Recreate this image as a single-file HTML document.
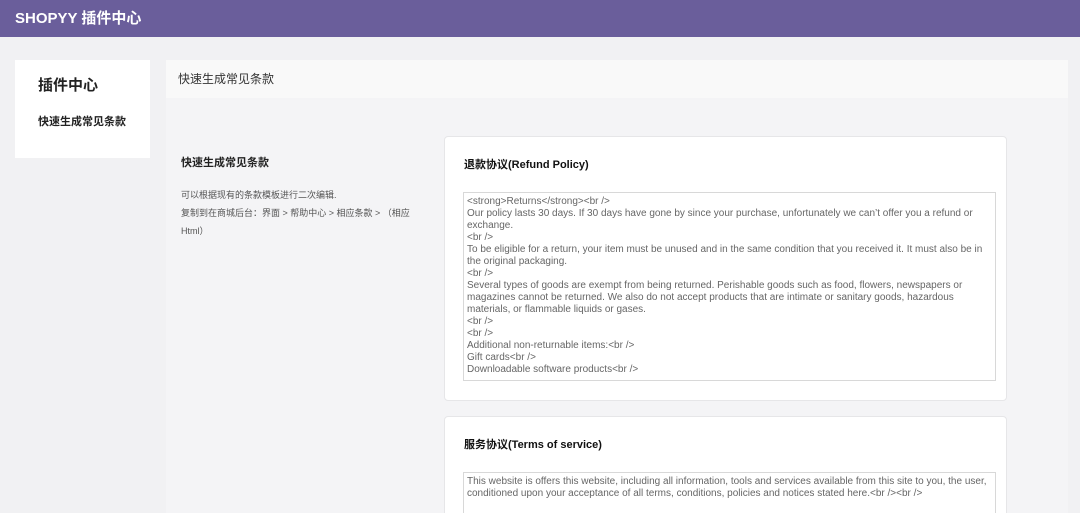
<!DOCTYPE html>
<html><head><meta charset="utf-8"><style>
*{margin:0;padding:0;box-sizing:border-box}
html,body{width:1080px;height:513px;overflow:hidden}
body{background:#f1f1f3;font-family:"Liberation Sans","Noto Sans CJK SC",sans-serif;position:relative}
.hd{position:absolute;left:0;top:0;width:1080px;height:37px;background:#6a5e9b;color:#fff;font-size:15px;font-weight:bold;line-height:37px;padding-left:15px}
.side{position:absolute;left:15px;top:60px;width:135px;height:98px;background:#fff}
.side h2{position:absolute;left:23px;top:14px;font-size:15px;font-weight:bold;color:#222}
.side p{position:absolute;left:23px;top:53px;font-size:11px;font-weight:bold;color:#222}
.main{position:absolute;left:166px;top:60px;width:902px;height:453px;background:#f4f4f6}
.mh{height:38px;background:#f9f9f9;font-size:12px;color:#333;line-height:38px;padding-left:12px}
.l1{position:absolute;left:181px;top:154px;font-size:11px;font-weight:bold;color:#222}
.l2{position:absolute;left:181px;top:186px;font-size:9px;color:#555;line-height:18px;width:235px}
.card{position:absolute;left:444px;width:563px;background:#fff;border:1px solid #e6e6e8;border-radius:4px;overflow:hidden}
.card h3{position:absolute;left:19px;top:19px;font-size:11px;font-weight:bold;color:#111}
.ta{position:absolute;left:18px;top:55px;width:533px;border:1px solid #d8d8d8;font-size:10px;color:#666;line-height:12px;padding:3px 3px 2px;overflow:hidden;white-space:pre-wrap}
</style></head><body>
<div class="hd">SHOPYY 插件中心</div>
<div class="side"><h2>插件中心</h2><p>快速生成常见条款</p></div>
<div class="main"><div class="mh">快速生成常见条款</div></div>
<div class="l1">快速生成常见条款</div>
<div class="l2">可以根据现有的条款模板进行二次编辑.<br>复制到在商城后台：界面 &gt; 帮助中心 &gt; 相应条款 &gt; （相应Html）</div>
<div class="card" style="top:136px;height:265px"><h3>退款协议(Refund Policy)</h3>
<div class="ta" style="height:189px">&lt;strong&gt;Returns&lt;/strong&gt;&lt;br /&gt;
Our policy lasts 30 days. If 30 days have gone by since your purchase, unfortunately we can’t offer you a refund or exchange.
&lt;br /&gt;
To be eligible for a return, your item must be unused and in the same condition that you received it. It must also be in the original packaging.
&lt;br /&gt;
Several types of goods are exempt from being returned. Perishable goods such as food, flowers, newspapers or magazines cannot be returned. We also do not accept products that are intimate or sanitary goods, hazardous materials, or flammable liquids or gases.
&lt;br /&gt;
&lt;br /&gt;
Additional non-returnable items:&lt;br /&gt;
Gift cards&lt;br /&gt;
Downloadable software products&lt;br /&gt;</div></div>
<div class="card" style="top:416px;height:97px;border-bottom:none;border-radius:4px 4px 0 0"><h3>服务协议(Terms of service)</h3>
<div class="ta" style="height:42px;border-bottom:none">This website is offers this website, including all information, tools and services available from this site to you, the user, conditioned upon your acceptance of all terms, conditions, policies and notices stated here.&lt;br /&gt;&lt;br /&gt;</div></div>
</body></html>
